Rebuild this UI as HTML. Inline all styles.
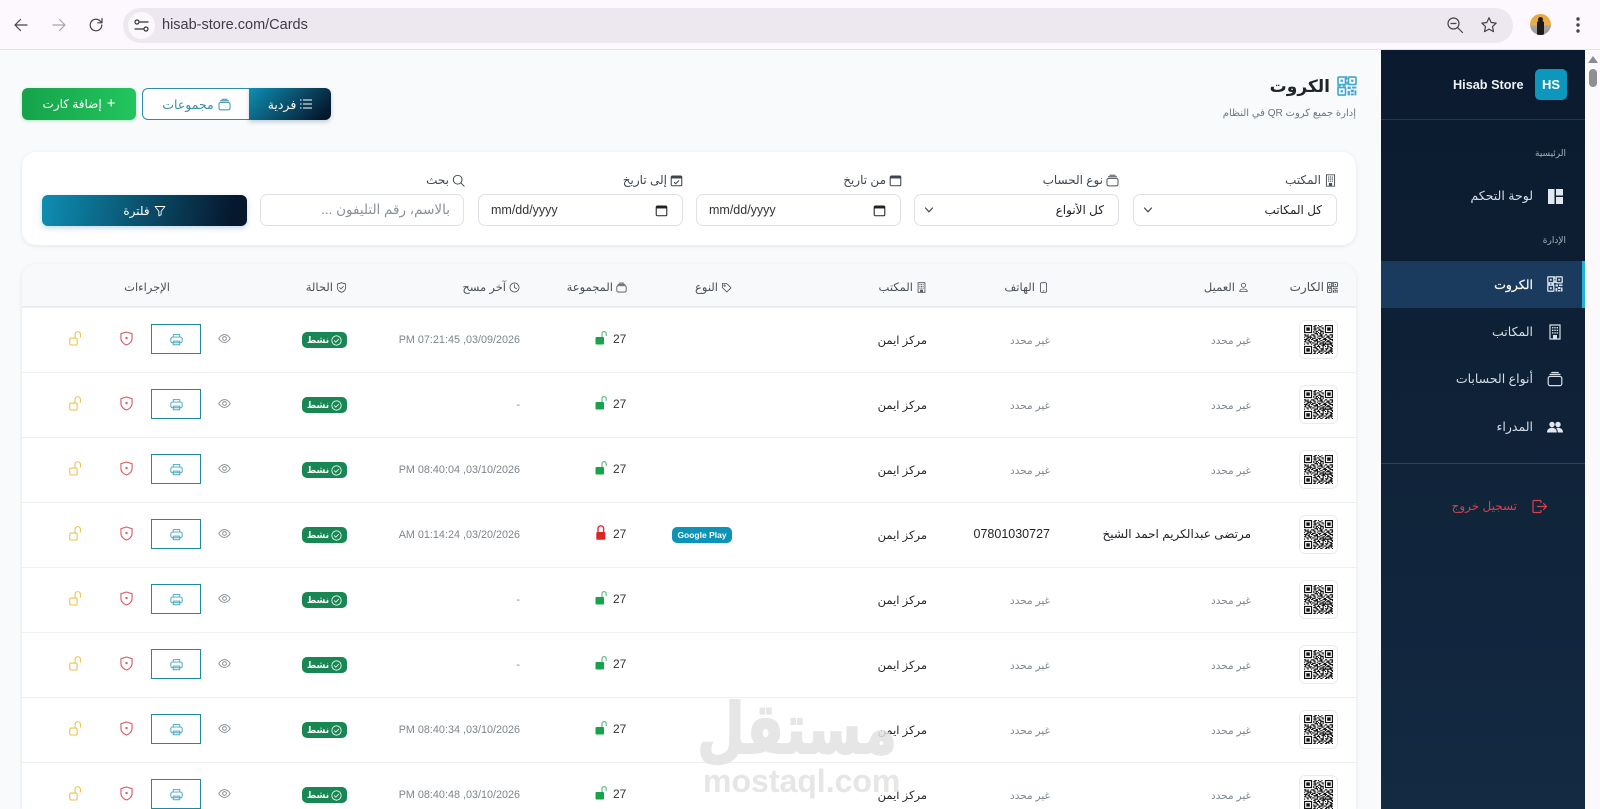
<!DOCTYPE html>
<html lang="ar" dir="rtl">
<head>
<meta charset="utf-8">
<title>الكروت</title>
<style>
*{box-sizing:border-box;margin:0;padding:0}
html,body{width:1600px;height:809px;overflow:hidden;background:#f8fafc}
body{position:relative;font-family:"Liberation Sans","DejaVu Sans",sans-serif;color:#212529}
.a{position:absolute;white-space:nowrap}
svg{display:block;overflow:visible}
.i{fill:none;stroke:currentColor;stroke-width:1.2;stroke-linecap:round;stroke-linejoin:round}
#chrome{position:absolute;left:0;top:0;width:1600px;height:50px;background:#fdf7fe;border-bottom:1px solid #e6e0e9}
#url{position:absolute;left:123px;top:8px;width:1390px;height:35px;border-radius:18px;background:#ede7f0}
#side{position:absolute;left:1381px;top:50px;width:204px;height:759px;background:linear-gradient(180deg,#0b1a2e 0%,#132a42 100%)}
#sb{position:absolute;left:1585px;top:50px;width:15px;height:759px;background:#fbf9fb}
.card{position:absolute;background:#fff;border-radius:14px;box-shadow:0 1px 5px rgba(20,40,70,.09)}
.lb{font-size:12px;color:#3d4650;display:flex;align-items:center;gap:3px;direction:rtl}
.f{position:absolute;top:194px;height:32px;width:205px;border:1px solid #dee2e6;border-radius:7px;background:#fff;font-family:inherit;font-size:12px;color:#212529;outline:0}
select.f{appearance:none;-webkit-appearance:none;padding-right:14px;direction:rtl}
.chev{position:absolute;top:207px;width:10px;height:6px;color:#444}
.m{color:#d6dde6;font-size:12.5px;right:52px}
.r{position:absolute;left:0;width:1600px;height:65px}
.r::before{content:"";position:absolute;left:22px;top:0;width:1334px;height:1px;background:#edf0f3}
.r>*{position:absolute;white-space:nowrap}
.q{left:1299px;top:13px;width:39px;height:39px;border:1px solid #e9ecef;border-radius:6px;background:#fff;padding:4px}
.c,.p{top:28px;font-size:10.5px;color:#7c858d}
.c{right:349px}.p{right:550px}
.ph{right:550px;top:25px;font-size:12.5px;color:#212529;font-family:"Liberation Sans",sans-serif}
.o{right:673px;top:26px;font-size:11.5px;color:#212529}
.g{left:613px;top:25px;font-size:12px;color:#333;font-family:"Liberation Sans",sans-serif}
.l{left:595px;top:23px;width:12px;height:16px}
.d{right:1080px;top:27px;font-size:10.8px;color:#7d858c;font-family:"Liberation Sans","DejaVu Sans",sans-serif;direction:rtl}
.s{left:302px;top:25px;width:45px;height:16px;border-radius:5px;background:#198754;color:#fff;font-size:9px;font-weight:bold;display:flex;align-items:center;justify-content:center;gap:2px;direction:rtl}
.e{left:218px;top:25px;width:13px;height:13px;color:#8a9198}
.b{left:151px;top:17px;width:50px;height:30px;border:1px solid #1f8a9f;color:#4aa8c0}
.b svg{position:absolute;left:18px;top:8px;width:13px;height:13px}
.x{left:120px;top:24px;width:13px;height:15px;color:#d65c66}
.u{left:69px;top:24px;width:13px;height:15px;color:#eec24f}
.h{top:280px;font-size:11.5px;color:#495057;display:flex;align-items:center;gap:3px;direction:rtl}
.h svg{width:11px;height:11px}
</style>
</head>
<body>
<svg width="0" height="0" style="position:absolute">
<symbol id="qr" viewBox="0 0 16 16"><g fill="none" stroke="currentColor" stroke-width="1.3"><rect x=".8" y=".8" width="6" height="6" rx=".6"/><rect x="9.200" y=".8" width="6" height="6" rx=".6"/><rect x=".8" y="9.200" width="6" height="6" rx=".6"/></g><path fill="currentColor" d="M2.900 2.900h1.800v1.800H2.900zM11.300 2.900h1.800v1.800h-1.800zM2.900 11.300h1.800v1.800H2.900zM8.500 8.500h2.500v2H8.500zM12 8.500h3.500v1.500H12zM11 11h2.500v2H11zM14 11.500h1.500v4H14zM8.500 12h1.800v3.500H8.500zM11 14h2.500v1.500H11zM7.300 0h1v3h-1zM7.500 4.500h1v2.500h-1zM0 7.500h3v1H0zM4.500 7.500h2.500v1H4.500z"/></symbol>
<symbol id="bld" viewBox="0 0 16 16"><path fill="none" stroke="currentColor" stroke-width="1.2" d="M3 1h10v14H3z"/><path fill="currentColor" d="M5 3h1.400v1.400H5zM7.300 3h1.400v1.400H7.300zM9.600 3H11v1.400H9.600zM5 5.600h1.400V7H5zM7.300 5.600h1.400V7H7.300zM9.600 5.600H11V7H9.600zM5 8.200h1.400v1.400H5zM7.300 8.200h1.400v1.400H7.300zM9.600 8.200H11v1.400H9.600zM6 11h4v4H6z"/></symbol>
<symbol id="wal" viewBox="0 0 16 16"><g class="i" stroke-width="1.300"><rect x="1.200" y="5.400" width="13.600" height="9.200" rx="2"/><path d="M3 3.400h10M4.800 1.500h6.400"/></g></symbol>
<symbol id="cal" viewBox="0 0 16 16"><rect x="1.500" y="2.500" width="13" height="12" rx="1.500" fill="none" stroke="currentColor" stroke-width="1.300"/><path fill="currentColor" d="M1.500 2.500h13v3h-13z"/></symbol>
<symbol id="calc" viewBox="0 0 16 16"><rect x="1.500" y="2.500" width="13" height="12" rx="1.500" fill="none" stroke="currentColor" stroke-width="1.300"/><path fill="currentColor" d="M1.500 2.500h13v3h-13z"/><path fill="none" stroke="currentColor" stroke-width="1.300" d="M5 10l2 2 4-4"/></symbol>
<symbol id="srch" viewBox="0 0 16 16"><g class="i" stroke-width="1.300"><circle cx="7" cy="7" r="5.400"/><path d="M11 11l4 4"/></g></symbol>
<symbol id="fun" viewBox="0 0 16 16"><path class="i" stroke-width="1.300" d="M1.500 2h13l-5 6.500V13l-3 1.500v-6z"/></symbol>
<symbol id="per" viewBox="0 0 16 16"><g class="i" stroke-width="1.200"><circle cx="8" cy="4.800" r="3"/><path d="M2.500 14c0-3 2.500-3.800 5.500-3.800s5.500.8 5.500 3.800z"/></g></symbol>
<symbol id="phn" viewBox="0 0 16 16"><g class="i" stroke-width="1.300"><rect x="3.500" y="1" width="9" height="14" rx="2"/><path d="M7.500 12.800h1"/></g></symbol>
<symbol id="tag" viewBox="0 0 16 16"><g class="i" stroke-width="1.300"><path d="M2 2h6l6.500 6.500-6 6L2 8z"/><circle cx="5.200" cy="5.200" r="1"/></g></symbol>
<symbol id="clk" viewBox="0 0 16 16"><g class="i" stroke-width="1.200"><circle cx="8" cy="8" r="6.600"/><path d="M8 3.800V8l3 1.800"/></g></symbol>
<symbol id="shc" viewBox="0 0 16 16"><g class="i" stroke-width="1.200"><path d="M8 1l6 2v5c0 3.500-3 6-6 7-3-1-6-3.500-6-7V3z"/><path d="M5.300 8l2 2 3.500-3.500"/></g></symbol>
<symbol id="chk" viewBox="0 0 16 16"><g class="i" stroke-width="1.300"><circle cx="8" cy="8" r="6.800"/><path d="M4.800 8.200l2.200 2.200 4.200-4.400"/></g></symbol>
<symbol id="eye" viewBox="0 0 16 16"><g class="i" stroke-width="1.300"><path d="M1 8s2.500-4.800 7-4.800S15 8 15 8s-2.500 4.800-7 4.800S1 8 1 8z"/><circle cx="8" cy="8" r="2.300"/></g></symbol>
<symbol id="prn" viewBox="0 0 16 16"><g class="i" stroke-width="1.400"><path d="M4 5V2h8v3"/><rect x="1" y="5" width="14" height="7" rx="2"/><path d="M4 10h8v4.500H4z"/></g></symbol>
<symbol id="shx" viewBox="0 0 14 16"><path class="i" stroke-width="1.200" d="M7 1l6 1.800v5.200c0 3.500-3 6-6 7-3-1-6-3.500-6-7V2.800z"/><circle cx="7" cy="7.500" r="1.300" fill="currentColor"/></symbol>
<symbol id="unl" viewBox="0 0 14 16"><g class="i" stroke-width="1.200"><rect x=".8" y="7.500" width="8" height="7.500" rx="1.500"/><path d="M6.500 7.500V3.500a2.900 2.900 0 015.800 0v3"/></g></symbol>
<symbol id="gu" viewBox="0 0 12 16"><path fill="none" stroke="#5fbf85" stroke-width="1.200" d="M7 7V3.700a2.100 2.100 0 014.200 0V6"/><rect x=".5" y="7" width="8.500" height="7.500" rx="1" fill="#16a34a"/></symbol>
<symbol id="rl" viewBox="0 0 12 16"><path fill="none" stroke="#dc2f3a" stroke-width="1.400" d="M3 7V3.600a2.800 2.800 0 015.600 0V7"/><rect x="1.300" y="7" width="9" height="7.800" rx="1" fill="#dc2626"/></symbol>
<symbol id="code" viewBox="0 0 25 25"><path fill="none" stroke="#111" stroke-width="1" d="M0 .5h7M9 .5h2M12 .5h1M15 .5h1M18 .5h7M0 1.500h1M6 1.500h1M8 1.500h2M13 1.500h2M18 1.500h1M24 1.500h1M0 2.500h1M2 2.500h3M6 2.500h1M9 2.500h1M11 2.500h2M15 2.500h2M18 2.500h1M20 2.500h3M24 2.500h1M0 3.500h1M2 3.500h3M6 3.500h1M8 3.500h3M13 3.500h1M16 3.500h1M18 3.500h1M20 3.500h3M24 3.500h1M0 4.500h1M2 4.500h3M6 4.500h1M9 4.500h1M12 4.500h3M18 4.500h1M20 4.500h3M24 4.500h1M0 5.500h1M6 5.500h1M8 5.500h1M10 5.500h2M14 5.500h3M18 5.500h1M24 5.500h1M0 6.500h7M8 6.500h1M10 6.500h1M12 6.500h1M14 6.500h1M16 6.500h1M18 6.500h7M9 7.500h3M13 7.500h2M16 7.500h1M0 8.500h2M3 8.500h1M6 8.500h3M11 8.500h1M14 8.500h2M18 8.500h2M22 8.500h3M1 9.500h3M5 9.500h1M8 9.500h2M12 9.500h4M17 9.500h1M20 9.500h2M24 9.500h1M0 10.500h1M3 10.500h4M9 10.500h1M11 10.500h1M15 10.500h2M19 10.500h3M23 10.500h2M2 11.500h2M5 11.500h1M7 11.500h3M12 11.500h3M17 11.500h2M21 11.500h2M0 12.500h3M4 12.500h1M6 12.500h2M10 12.500h2M13 12.500h1M16 12.500h4M22 12.500h3M1 13.500h1M3 13.500h2M8 13.500h4M14 13.500h2M18 13.500h1M20 13.500h2M24 13.500h1M0 14.500h2M4 14.500h3M9 14.500h1M11 14.500h3M16 14.500h2M19 14.500h4M2 15.500h2M5 15.500h1M7 15.500h2M11 15.500h1M14 15.500h3M18 15.500h1M22 15.500h3M0 16.500h1M3 16.500h1M6 16.500h1M9 16.500h3M13 16.500h2M16 16.500h8M8 17.500h2M12 17.500h1M15 17.500h2M17 17.500h1M20 17.500h1M23 17.500h2M0 18.500h7M9 18.500h1M11 18.500h3M16 18.500h1M18 18.500h1M20 18.500h2M24 18.500h1M0 19.500h1M6 19.500h1M8 19.500h3M13 19.500h1M16 19.500h1M20 19.500h1M22 19.500h2M0 20.500h1M2 20.500h3M6 20.500h1M10 20.500h2M14 20.500h3M18 20.500h3M23 20.500h2M0 21.500h1M2 21.500h3M6 21.500h1M8 21.500h1M11 21.500h2M15 21.500h2M19 21.500h1M22 21.500h2M0 22.500h1M2 22.500h3M6 22.500h1M8 22.500h3M13 22.500h3M17 22.500h2M21 22.500h4M0 23.500h1M6 23.500h1M9 23.500h1M12 23.500h2M16 23.500h1M19 23.500h3M23 23.500h1M0 24.500h7M8 24.500h2M11 24.500h1M14 24.500h2M18 24.500h2M21 24.500h1M24 24.500h1"/></symbol>
</svg>

<!-- Browser chrome -->
<div id="chrome">
  <svg class="a" style="left:11px;top:15px;color:#444" width="20" height="20" viewBox="0 0 20 20"><path class="i" stroke-width="1.700" d="M16 10H4M9.500 4.500L4 10l5.500 5.500"/></svg>
  <svg class="a" style="left:49px;top:15px;color:#a9a5ad" width="20" height="20" viewBox="0 0 20 20"><path class="i" stroke-width="1.700" d="M4 10h12M10.500 4.500L16 10l-5.500 5.500"/></svg>
  <svg class="a" style="left:86px;top:15px;color:#444" width="20" height="20" viewBox="0 0 20 20"><path class="i" stroke-width="1.700" d="M15.800 10a5.800 5.800 0 11-1.700-4.100L16 7.800M16 3.500v4.300h-4.300"/></svg>
  <div id="url"></div>
  <div class="a" style="left:128px;top:12px;width:27px;height:27px;border-radius:50%;background:#fbf8fc"></div>
  <svg class="a" style="left:133px;top:17px;color:#333" width="17" height="17" viewBox="0 0 17 17"><g class="i" stroke-width="1.500"><path d="M7 5h8M2 12h8"/><circle cx="4" cy="5" r="2"/><circle cx="13" cy="12" r="2"/></g></svg>
  <div class="a" dir="ltr" style="left:162px;top:17px;font-size:14.5px;color:#3f3b44">hisab-store.com/Cards</div>
  <svg class="a" style="left:1446px;top:16px;color:#444" width="18" height="18" viewBox="0 0 18 18"><g class="i" stroke-width="1.600"><circle cx="7.500" cy="7.500" r="5.500"/><path d="M11.500 11.500l5 5M5 7.500h5"/></g></svg>
  <svg class="a" style="left:1480px;top:16px;color:#444" width="18" height="18" viewBox="0 0 18 18"><path class="i" stroke-width="1.600" d="M9 1.800l2.200 4.700 5 .6-3.700 3.500 1 5L9 13.100l-4.500 2.500 1-5L1.800 7.100l5-.6z"/></svg>
  <div class="a" style="left:1530px;top:14px;width:21px;height:21px;border-radius:50%;background:linear-gradient(180deg,#e9a53a 0,#e5b050 55%,#a9a59c 56%,#9c9a94 100%);overflow:hidden"><div class="a" style="left:8px;top:3px;width:5px;height:5px;background:#1d1a1a;border-radius:50%"></div><div class="a" style="left:7px;top:7px;width:7px;height:14px;background:#1d1a1a;border-radius:2px 2px 0 0"></div></div>
  <svg class="a" style="left:1576px;top:16px;color:#444" width="4" height="18" viewBox="0 0 4 18"><circle cx="2" cy="3" r="1.700" fill="currentColor"/><circle cx="2" cy="9" r="1.700" fill="currentColor"/><circle cx="2" cy="15" r="1.700" fill="currentColor"/></svg>
</div>

<!-- Page header -->
<div class="a" style="left:22px;top:88px;width:114px;height:32px;border-radius:6px;background:linear-gradient(90deg,#16a34a,#22c55e);color:#fff;font-size:12px;display:flex;align-items:center;justify-content:center;gap:5px;direction:rtl;box-shadow:0 1px 3px rgba(22,163,74,.3)"><span style="font-size:15px;line-height:12px">+</span><span>إضافة كارت</span></div>
<div class="a" style="left:142px;top:88px;width:108px;height:32px;border:1px solid #2d8da8;border-right:0;border-radius:6px 0 0 6px;background:#fff;color:#3d8ca3;font-size:12.5px;display:flex;align-items:center;justify-content:center;gap:4px;direction:rtl"><svg width="13" height="13"><use href="#wal"/></svg><span>مجموعات</span></div>
<div class="a" style="left:249px;top:88px;width:82px;height:32px;border-radius:0 6px 6px 0;background:linear-gradient(135deg,#0e8fb3,#06182e 90%);color:#fff;font-size:12.5px;display:flex;align-items:center;justify-content:center;gap:4px;direction:rtl;box-shadow:0 2px 5px rgba(10,40,80,.22)"><svg width="12" height="12" viewBox="0 0 12 12"><path stroke="#fff" stroke-width="1.100" d="M0 2h1.500M3 2h9M0 6h1.500M3 6h9M0 10h1.500M3 10h9"/></svg><span>فردية</span></div>

<div class="a" style="right:270px;top:77px;font-size:17px;font-weight:bold;color:#212529">الكروت</div>
<svg class="a" style="left:1337px;top:76px;color:#3ea6cf" width="20" height="20"><use href="#qr"/></svg>
<div class="a" style="right:244px;top:108px;font-size:10px;color:#6b7680">إدارة جميع كروت QR في النظام</div>

<!-- Filter card -->
<div class="card" style="left:22px;top:152px;width:1334px;height:93px"></div>
<div class="a lb" style="right:263px;top:173px"><svg width="13" height="13" style="color:#495057"><use href="#bld"/></svg><span>المكتب</span></div>
<div class="a lb" style="right:481px;top:173px"><svg width="13" height="13" style="color:#495057"><use href="#wal"/></svg><span>نوع الحساب</span></div>
<div class="a lb" style="right:698px;top:173px"><svg width="13" height="13"><use href="#cal"/></svg><span>من تاريخ</span></div>
<div class="a lb" style="right:917px;top:173px"><svg width="13" height="13"><use href="#calc"/></svg><span>إلى تاريخ</span></div>
<div class="a lb" style="right:1135px;top:173px"><svg width="13" height="13"><use href="#srch"/></svg><span>بحث</span></div>

<select class="f" style="left:1133px;width:204px"><option>كل المكاتب</option></select>
<svg class="chev" style="left:1143px" viewBox="0 0 10 6"><path class="i" stroke-width="1.300" d="M1.500 1L5 4.800 8.500 1"/></svg>
<select class="f" style="left:914px"><option>كل الأنواع</option></select>
<svg class="chev" style="left:924px" viewBox="0 0 10 6"><path class="i" stroke-width="1.300" d="M1.500 1L5 4.800 8.500 1"/></svg>
<div class="f" dir="ltr" style="left:696px;padding:8px 0 0 12px;font-size:12.5px;color:#333;white-space:nowrap">mm/dd/yyyy<svg class="a" style="left:176px;top:9px;color:#222" width="13" height="13"><use href="#cal"/></svg></div>
<div class="f" dir="ltr" style="left:478px;padding:8px 0 0 12px;font-size:12.5px;color:#333;white-space:nowrap">mm/dd/yyyy<svg class="a" style="left:176px;top:9px;color:#222" width="13" height="13"><use href="#cal"/></svg></div>
<div class="f" style="left:260px;width:204px;padding:7px 13px 0 0;font-size:13.5px;color:#8a9096;white-space:nowrap;direction:rtl">بالاسم، رقم التليفون ...</div>
<div class="a" style="left:42px;top:195px;width:205px;height:31px;border-radius:6px;background:linear-gradient(100deg,#0e8fb3,#06182e 92%);color:#fff;font-size:12px;display:flex;align-items:center;justify-content:center;gap:4px;direction:rtl;box-shadow:0 2px 6px rgba(14,100,150,.25)"><svg width="12" height="12"><use href="#fun"/></svg><span>فلترة</span></div>

<!-- Table -->
<div class="card" style="left:22px;top:264px;width:1334px;height:545px;border-radius:14px 14px 0 0;overflow:hidden"><div style="height:43px;background:#f8f9fa;border-bottom:1px solid #e9ecef"></div></div>
<div class="a h" style="right:262px"><svg><use href="#qr"/></svg><span style="font-size:12px">الكارت</span></div>
<div class="a h" style="right:351px"><svg><use href="#per"/></svg><span>العميل</span></div>
<div class="a h" style="right:551px"><svg><use href="#phn"/></svg><span>الهاتف</span></div>
<div class="a h" style="right:673px"><svg><use href="#bld"/></svg><span>المكتب</span></div>
<div class="a h" style="right:868px"><svg><use href="#tag"/></svg><span>النوع</span></div>
<div class="a h" style="right:973px"><svg><use href="#wal"/></svg><span>المجموعة</span></div>
<div class="a h" style="right:1080px"><svg><use href="#clk"/></svg><span>آخر مسح</span></div>
<div class="a h" style="right:1253px"><svg><use href="#shc"/></svg><span>الحالة</span></div>
<div class="a h" style="right:1430px"><span>الإجراءات</span></div>

<div class="r" style="top:307px"><div class="q"><svg width="29" height="29"><use href="#code"/></svg></div><span class="c">غير محدد</span><span class="p">غير محدد</span><span class="o">مركز ايمن</span><span class="g">27</span><svg class="l"><use href="#gu"/></svg><span class="d">03/09/2026, 07:21:45 PM</span><div class="s"><svg width="11" height="11"><use href="#chk"/></svg><span>نشط</span></div><svg class="e"><use href="#eye"/></svg><div class="b"><svg><use href="#prn"/></svg></div><svg class="x"><use href="#shx"/></svg><svg class="u"><use href="#unl"/></svg></div>
<div class="r" style="top:372px"><div class="q"><svg width="29" height="29"><use href="#code"/></svg></div><span class="c">غير محدد</span><span class="p">غير محدد</span><span class="o">مركز ايمن</span><span class="g">27</span><svg class="l"><use href="#gu"/></svg><span class="d">-</span><div class="s"><svg width="11" height="11"><use href="#chk"/></svg><span>نشط</span></div><svg class="e"><use href="#eye"/></svg><div class="b"><svg><use href="#prn"/></svg></div><svg class="x"><use href="#shx"/></svg><svg class="u"><use href="#unl"/></svg></div>
<div class="r" style="top:437px"><div class="q"><svg width="29" height="29"><use href="#code"/></svg></div><span class="c">غير محدد</span><span class="p">غير محدد</span><span class="o">مركز ايمن</span><span class="g">27</span><svg class="l"><use href="#gu"/></svg><span class="d">03/10/2026, 08:40:04 PM</span><div class="s"><svg width="11" height="11"><use href="#chk"/></svg><span>نشط</span></div><svg class="e"><use href="#eye"/></svg><div class="b"><svg><use href="#prn"/></svg></div><svg class="x"><use href="#shx"/></svg><svg class="u"><use href="#unl"/></svg></div>
<div class="r" style="top:502px"><div class="q"><svg width="29" height="29"><use href="#code"/></svg></div><span class="c" style="font-size:12px;color:#212529;top:25px">مرتضى عبدالكريم احمد الشيخ</span><span class="ph">07801030727</span><span class="o">مركز ايمن</span><div style="left:672px;top:25px;width:60px;height:16px;border-radius:5px;background:#0e93b8;color:#fff;font-size:8.5px;font-weight:bold;text-align:center;line-height:16px;font-family:'Liberation Sans',sans-serif">Google Play</div><span class="g">27</span><svg class="l"><use href="#rl"/></svg><span class="d">03/20/2026, 01:14:24 AM</span><div class="s"><svg width="11" height="11"><use href="#chk"/></svg><span>نشط</span></div><svg class="e"><use href="#eye"/></svg><div class="b"><svg><use href="#prn"/></svg></div><svg class="x"><use href="#shx"/></svg><svg class="u"><use href="#unl"/></svg></div>
<div class="r" style="top:567px"><div class="q"><svg width="29" height="29"><use href="#code"/></svg></div><span class="c">غير محدد</span><span class="p">غير محدد</span><span class="o">مركز ايمن</span><span class="g">27</span><svg class="l"><use href="#gu"/></svg><span class="d">-</span><div class="s"><svg width="11" height="11"><use href="#chk"/></svg><span>نشط</span></div><svg class="e"><use href="#eye"/></svg><div class="b"><svg><use href="#prn"/></svg></div><svg class="x"><use href="#shx"/></svg><svg class="u"><use href="#unl"/></svg></div>
<div class="r" style="top:632px"><div class="q"><svg width="29" height="29"><use href="#code"/></svg></div><span class="c">غير محدد</span><span class="p">غير محدد</span><span class="o">مركز ايمن</span><span class="g">27</span><svg class="l"><use href="#gu"/></svg><span class="d">-</span><div class="s"><svg width="11" height="11"><use href="#chk"/></svg><span>نشط</span></div><svg class="e"><use href="#eye"/></svg><div class="b"><svg><use href="#prn"/></svg></div><svg class="x"><use href="#shx"/></svg><svg class="u"><use href="#unl"/></svg></div>
<div class="r" style="top:697px"><div class="q"><svg width="29" height="29"><use href="#code"/></svg></div><span class="c">غير محدد</span><span class="p">غير محدد</span><span class="o">مركز ايمن</span><span class="g">27</span><svg class="l"><use href="#gu"/></svg><span class="d">03/10/2026, 08:40:34 PM</span><div class="s"><svg width="11" height="11"><use href="#chk"/></svg><span>نشط</span></div><svg class="e"><use href="#eye"/></svg><div class="b"><svg><use href="#prn"/></svg></div><svg class="x"><use href="#shx"/></svg><svg class="u"><use href="#unl"/></svg></div>
<div class="r" style="top:762px;height:47px;overflow:hidden"><div class="q"><svg width="29" height="29"><use href="#code"/></svg></div><span class="c">غير محدد</span><span class="p">غير محدد</span><span class="o">مركز ايمن</span><span class="g">27</span><svg class="l"><use href="#gu"/></svg><span class="d">03/10/2026, 08:40:48 PM</span><div class="s"><svg width="11" height="11"><use href="#chk"/></svg><span>نشط</span></div><svg class="e"><use href="#eye"/></svg><div class="b"><svg><use href="#prn"/></svg></div><svg class="x"><use href="#shx"/></svg><svg class="u"><use href="#unl"/></svg></div>

<!-- Watermark -->
<div class="a" style="left:703px;top:689px;width:194px;height:80px;text-align:right;font-size:70px;line-height:80px;font-weight:bold;color:#e2e2e2;opacity:.85;direction:rtl;transform:scaleX(.78);transform-origin:right center;-webkit-text-stroke:2px #e2e2e2">مستقل</div>
<div class="a" dir="ltr" style="left:703px;top:762px;font-size:32px;line-height:38px;font-weight:bold;color:#e2e2e2;opacity:.85;font-family:'Liberation Sans',sans-serif">mostaql.com</div>

<!-- Sidebar -->
<div id="side">
  <div class="a" style="left:154px;top:19px;width:32px;height:31px;border-radius:5px;background:#0e97bd;color:#fff;font-weight:bold;font-size:13px;text-align:center;line-height:31px;font-family:'Liberation Sans',sans-serif" dir="ltr">HS</div>
  <div class="a" dir="ltr" style="left:72px;top:28px;font-size:12.7px;font-weight:bold;color:#eef2f6;font-family:'Liberation Sans',sans-serif">Hisab Store</div>
  <div class="a" style="left:0;top:69px;width:204px;height:1px;background:#25384d"></div>
  <div class="a" style="right:19px;top:98px;font-size:9px;color:#a5b0bc">الرئيسية</div>
  <div class="a" style="right:19px;top:185px;font-size:9px;color:#a5b0bc">الإدارة</div>
  <div class="a" style="left:0;top:211px;width:204px;height:47px;background:#1b3b5e;border-right:3px solid #22b3d4"></div>
  <div class="a m" style="top:138px">لوحة التحكم</div>
  <svg class="a" style="left:167px;top:139px;color:#e3e8ee" width="15" height="15" viewBox="0 0 15 15"><path fill="currentColor" d="M0 0h6.500v15H0zM8 0h7v6.500H8zM8 8h7v7H8z"/></svg>
  <div class="a m" style="top:227px;color:#fff;font-size:12.5px;font-weight:normal;-webkit-text-stroke:.2px #fff">الكروت</div>
  <svg class="a" style="left:166px;top:226px;color:#d9e0e8" width="16" height="16"><use href="#qr"/></svg>
  <div class="a m" style="top:274px">المكاتب</div>
  <svg class="a" style="left:166px;top:274px;color:#d9e0e8" width="16" height="16"><use href="#bld"/></svg>
  <div class="a m" style="top:321px">أنواع الحسابات</div>
  <svg class="a" style="left:166px;top:321px;color:#d9e0e8" width="16" height="16"><use href="#wal"/></svg>
  <div class="a m" style="top:369px">المدراء</div>
  <svg class="a" style="left:166px;top:369px;color:#e3e8ee" width="16" height="16" viewBox="0 0 16 16"><g fill="currentColor"><circle cx="5" cy="5.500" r="2.700"/><circle cx="11" cy="5.500" r="2.700"/><path d="M0 13.500c0-3 2-4.700 5-4.700s4.800 1.700 4.800 4.700zM10.800 13.500c0-1.700-.5-3.200-1.500-4.300.5-.2 1-.4 1.700-.4 3 0 5 1.700 5 4.700z"/></g></svg>
  <div class="a" style="left:0;top:413px;width:204px;height:1px;background:#2b4259"></div>
  <div class="a" style="right:68px;top:449px;font-size:12px;color:#d8414e">تسجيل خروج</div>
  <svg class="a" style="left:151px;top:449px;color:#d8414e" width="15" height="15" viewBox="0 0 15 15"><path class="i" stroke-width="1.300" d="M9 3.500V2.500a1 1 0 00-1-1H2a1 1 0 00-1 1v10a1 1 0 001 1h6a1 1 0 001-1v-1M5.500 7.500h9M11.500 4.500l3 3-3 3"/></svg>
</div>

<!-- Scrollbar -->
<div id="sb">
  <svg class="a" style="left:3px;top:6px;color:#8b8b8b" width="10" height="7" viewBox="0 0 10 7"><path fill="currentColor" d="M5 0l5 7H0z"/></svg>
  <div class="a" style="left:4px;top:19px;width:8px;height:18px;border-radius:4px;background:#8f8f8f"></div>
</div>
</body>
</html>
